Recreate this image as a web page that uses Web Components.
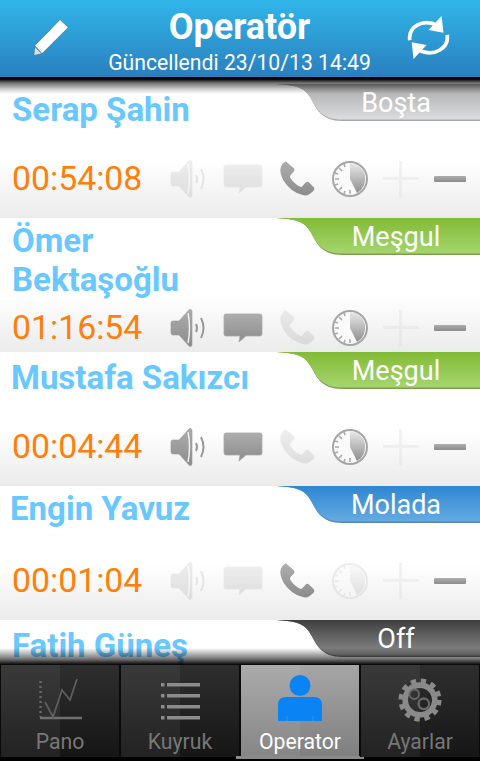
<!DOCTYPE html>
<html lang="tr">
<head>
<meta charset="utf-8">
<title>Operatör</title>
<style>
  html, body { margin: 0; height: 100%; overflow: hidden; background: #000; }
  body { font-family: Roboto, "Noto Sans", sans-serif; }
  operator-app { height: 761px; }
</style>
</head>
<body>
<operator-app>
  <app-header slot="header" title="Operatör" updated="Güncellendi 23/10/13 14:49"></app-header>
  <op-card name="Serap Şahin" time="00:54:08" status="idle" label="Boşta" on="phone clock minus"></op-card>
  <op-card name="Ömer Bektaşoğlu" time="01:16:54" status="busy" label="Meşgul" on="speaker chat clock minus" lift="3"></op-card>
  <op-card name="Mustafa Sakızcı" time="00:04:44" status="busy" label="Meşgul" on="speaker chat clock minus" nudge="-1"></op-card>
  <op-card name="Engin Yavuz" time="00:01:04" status="break" label="Molada" on="phone minus" nudge="-2" lift="3"></op-card>
  <op-card name="Fatih Güneş" status="off" label="Off"></op-card>
  <tab-bar slot="tabs">
    <tab-item icon="chart" label="Pano"></tab-item>
    <tab-item icon="list" label="Kuyruk"></tab-item>
    <tab-item icon="user" label="Operator" active></tab-item>
    <tab-item icon="gear" label="Ayarlar"></tab-item>
  </tab-bar>
</operator-app>

<script>
const ICONS = {
  speaker: `<svg width="38" height="40" viewBox="0 0 38 40">
    <path fill="url(#g)" stroke="#999" stroke-width=".6" d="M1 15q0-2 2-2h6L19 2q2-2 3 1v34q-1 3-3 1L9 27H3q-2 0-2-2z"/>
    <path fill="none" stroke="#eee" stroke-width="1.5" d="M18 5q3 15 0 30"/>
    <path fill="none" stroke="#999" stroke-width="2" d="M26 16q2 4 0 8M31 10q5 10 0 20"/></svg>`,
  chat: `<svg width="40" height="30" viewBox="0 0 40 30">
    <path fill="url(#g)" stroke="#aaa" stroke-width=".8" d="M3 1h34q2 0 2 2v18q0 2-2 2H23l-7 6 1-6H3q-2 0-2-2V3q0-2 2-2z"/></svg>`,
  phone: `<svg width="38" height="36" viewBox="0 0 40 38">
    <path fill="url(#g)" d="M9 1l8 7q1 2-1 4l-3 3q-1 1 0 3 4 6 10 9 2 1 3-1l3-3q2-2 4 0l5 5q1 2-1 4l-4 3q-3 2-7 1Q14 33 6 21 1 12 3 6q1-3 4-5 1-1 2 0z"/></svg>`,
  clock: `<svg width="36" height="36" viewBox="0 0 36 36">
    <defs><linearGradient id="w" x1="0" y1="0" x2="0" y2="1"><stop offset="0" stop-color="#e8e8e8"/><stop offset="1" stop-color="#8f8f8f"/></linearGradient></defs>
    <circle cx="18" cy="18" r="17" fill="#fafafa" stroke="#a6a6a6" stroke-width="2"/>
    <path fill="url(#w)" d="M18 18V2a16 16 0 0 1 7 30z"/>
    <path stroke="#aaa" stroke-width="1.6" d="M3 18h4M18 33v-4M7 7l3 3M7 29l3-3M12 3l1 3M3 12l3 1M3 24l3-1M12 33l1-3"/></svg>`,
  plus: `<svg width="36" height="36" viewBox="0 0 36 36">
    <path fill="#c8c8c8" d="M16 0h3v16h17v3H19v17h-3V19H0v-3h16z"/></svg>`,
  minus: `<svg width="32" height="6" viewBox="0 0 32 6">
    <rect width="32" height="6" rx="1" fill="url(#g)"/></svg>`
};

const TAB_ICONS = {
  chart: `<svg width="46" height="44" viewBox="0 0 46 44" fill="none">
    <path stroke="#6a6a6a" stroke-width="2.4" stroke-dasharray="2 3" d="M3.5 2v36"/>
    <path stroke="#6f6f6f" stroke-width="2.5" d="M3 39h42"/>
    <path stroke="#5e5e5e" stroke-width="1.8" d="M8 23l8 15 9-27 8 10 7-21"/></svg>`,
  list: `<svg width="42" height="37" viewBox="0 0 42 37" fill="#8c8c8c">
    <rect x="2" width="3.5" height="3.5"/><rect x="8" width="33" height="3.5"/>
    <rect x="2" y="11" width="3.5" height="3.5"/><rect x="8" y="11" width="33" height="3.5"/>
    <rect x="2" y="22" width="3.5" height="3.5"/><rect x="8" y="22" width="33" height="3.5"/>
    <rect x="2" y="33" width="3.5" height="3.5"/><rect x="8" y="33" width="33" height="3.5"/></svg>`,
  user: `<svg width="44" height="46" viewBox="0 0 44 46" fill="#0a84f4" style="margin-bottom:7px">
    <circle cx="22" cy="10.5" r="10.5"/>
    <path d="M8 22h28q8 0 8 8v16H0V30q0-8 8-8z"/>
    <path stroke="#4a90d0" stroke-width="1" d="M9 41v5M35 41v5"/></svg>`,
  gear: `<svg width="44" height="44" viewBox="0 0 46 46" fill="none" style="margin-bottom:3px">
    <circle cx="23" cy="23" r="20" stroke="#8a8a8a" stroke-width="5" stroke-dasharray="5.5 5"/>
    <circle cx="23" cy="23" r="15.5" stroke="#8a8a8a" stroke-width="6"/>
    <circle cx="17" cy="17" r="5" stroke="#666" stroke-width="2"/>
    <circle cx="27" cy="27" r="5.5" stroke="#666" stroke-width="2.5"/></svg>`
};

const STATUS_COLORS = {
  idle: ['#a9a9a9', '#dcdddf', '#a8a8a8'],
  busy: ['#82bb35', '#a6d56e', '#7d9c52'],
  break: ['#2f86d2', '#64abe2', '#5b86ad'],
  off: ['#3e3e3e', '#8c8c8c', '#6a6a6a']
};

class OperatorApp extends HTMLElement {
  constructor() {
    super();
    this.attachShadow({ mode: 'open' });
    this.shadowRoot.innerHTML = `
      <style>
        :host { display: flex; flex-direction: column; background: #000; }
        .list { position: relative; flex: 1; min-height: 0; overflow: hidden; padding-top: 7px; background: #fff; }
        .shade { position: absolute; left: 0; right: 0; pointer-events: none; z-index: 2; }
        .top { top: 0; height: 17px; background: linear-gradient(#000 0, #000 2px, rgba(0,0,0,.55) 6px, rgba(0,0,0,.15) 13px, rgba(0,0,0,0)); }
        .bottom { bottom: 0; height: 17px; background: linear-gradient(rgba(0,0,0,0), rgba(0,0,0,.25) 5px, rgba(0,0,0,.55) 11px, #000); }
      </style>
      <slot name="header"></slot>
      <div class="list">
        <div class="shade top"></div>
        <slot></slot>
        <div class="shade bottom"></div>
      </div>
      <slot name="tabs"></slot>
    `;
  }
}

class AppHeader extends HTMLElement {
  constructor() {
    super();
    this.attachShadow({ mode: 'open' });
  }

  connectedCallback() {
    this.shadowRoot.innerHTML = `
      <style>
        :host { display: flex; height: 77px; color: #fff; background: linear-gradient(#31b6e9, #2a7fbe); }
        .side { flex: 0 0 90px; display: flex; align-items: center; justify-content: center; padding-bottom: 5px; box-sizing: border-box; }
        .mid { flex: 1; text-align: center; margin-left: -1px; }
        h1 { margin: 0; padding-top: 5px; font: 700 36px/44px Roboto, sans-serif; }
        p { margin: 0; padding-top: 2px; font: 400 21.2px/24px Roboto, sans-serif; white-space: nowrap; }
      </style>
      <div class="side" style="padding-left:11px;padding-bottom:3px">
        <svg width="38" height="41" viewBox="0 0 42 44">
          <path fill="#fff" stroke="#2a6f9c" stroke-width=".7" d="M3 31L31 2l9 9-29 29z"/>
          <path fill="#d8dde0" stroke="#2a6f9c" stroke-width=".7" d="M3 32l8 8-9 2z"/>
        </svg>
      </div>
      <div class="mid">
        <h1>${this.getAttribute('title')}</h1>
        <p>${this.getAttribute('updated')}</p>
      </div>
      <div class="side" style="padding-right:14px;padding-bottom:2px">
        <svg width="43" height="47" viewBox="0 0 46 48" fill="none" stroke="#fff" stroke-width="4">
          <path d="M3 27C1 13 16 3 33 11"/>
          <path fill="#fff" stroke="none" d="M37 1l2 18-16-3z"/>
          <path d="M43 21c2 14-13 24-30 17"/>
          <path fill="#fff" stroke="none" d="M7 47L5 29l16 3z"/>
        </svg>
      </div>
    `;
  }
}

class OpCard extends HTMLElement {
  constructor() {
    super();
    this.attachShadow({ mode: 'open' });
  }

  connectedCallback() {
    const on = (this.getAttribute('on') || '').split(' ');
    const status = this.getAttribute('status');
    const [from, to, edge] = STATUS_COLORS[status];
    const nudge = Number(this.getAttribute('nudge') || 0);
    const lift = Number(this.getAttribute('lift') || 0);
    const time = this.getAttribute('time');
    const icons = Object.keys(ICONS).map(k =>
      `<span class="ic ${on.includes(k) ? 'on' : ''}" style="width:${{speaker:38,chat:40,phone:38,clock:36,plus:36,minus:32}[k]}px">${ICONS[k]}</span>`
    ).join('');
    // the last card is cut off by the tab bar, so it has no row to draw
    const row = time ? `
      <div class="row">
        <div class="time">${time}</div>
        <svg width="0" height="0" style="position:absolute"><defs>
          <linearGradient id="g" x1="0" y1="0" x2="0" y2="1"><stop offset="0" stop-color="#adadad"/><stop offset="1" stop-color="#8c8c8c"/></linearGradient>
        </defs></svg>
        ${icons}
      </div>` : '';
    this.shadowRoot.innerHTML = `
      <style>
        :host { display: block; position: relative; height: 134px; overflow: hidden; background: linear-gradient(#fff 58%, #ebebeb); }
        .head { min-height: 75px; box-sizing: border-box; padding: 6px 0 9px 12px; }
        .name { max-width: 245px; font: 700 33px/39px Roboto, sans-serif; color: #68c8ff; }
        .row { display: flex; align-items: center; height: 40px; padding-left: 12px; }
        .time { flex: 0 0 158px; font: 400 33.8px/40px Roboto, sans-serif; color: #ff7f0a; }
        .ic { display: flex; justify-content: center; align-items: center; margin-right: 15.2px; opacity: .2; }
        .ic.on { opacity: 1; }
        .ic svg { display: block; }
        .status { position: absolute; top: 0; right: 0; width: 210px; height: 37px; }
        .status svg { position: absolute; inset: 0; }
        .label { position: absolute; top: 4px; left: 56px; right: 0; padding-right: 14px; text-align: center; font: 400 27px/31px Roboto, sans-serif; color: #fff; }
      </style>
      <div class="head"><div class="name" style="margin-left:${nudge}px;margin-top:${-lift}px">${this.getAttribute('name')}</div></div>
      ${row}
      <div class="status">
        <svg width="210" height="37" viewBox="0 0 210 37">
          <defs><linearGradient id="s" x1="0" y1="0" x2="0" y2="1"><stop offset="0" stop-color="${from}"/><stop offset="1" stop-color="${to}"/></linearGradient></defs>
          <path fill="${edge}" d="M0 0C18 0 30 2 36 8 42 14 44 23 50 29 55 34 62 37 72 37H210V0z"/>
          <path fill="url(#s)" d="M0 0C18 0 30 2 36 8 42 14 44 22 50 28 55 33 62 35.5 72 35.5H210V0z"/>
        </svg>
        <div class="label">${this.getAttribute('label')}</div>
      </div>
    `;
  }
}

class TabBar extends HTMLElement {
  constructor() {
    super();
    this.attachShadow({ mode: 'open' });
    this.shadowRoot.innerHTML = `
      <style>
        :host { display: grid; grid-template-columns: repeat(4, 1fr); height: 96px; background: #000; }
      </style>
      <slot></slot>
    `;
  }
}

class TabItem extends HTMLElement {
  constructor() {
    super();
    this.attachShadow({ mode: 'open' });
  }

  connectedCallback() {
    const active = this.hasAttribute('active');
    this.shadowRoot.innerHTML = `
      <style>
        :host { display: block; position: relative; height: 96px; }
        .face { box-sizing: border-box; height: 92px; display: flex; flex-direction: column; align-items: center; border-left: 1px solid #0a0a0a; border-right: 1px solid #0a0a0a;
          background: linear-gradient(90deg, rgba(255,255,255,.055) 50%, rgba(255,255,255,0) 50%), linear-gradient(${active ? '#a6a6a6, #7f7f7f' : '#2e2e2e, #161616'}); }
        .art { height: 56px; margin-top: 8px; display: flex; align-items: center; justify-content: center; }
        .art svg { display: block; }
        .label { font: 400 21.2px/26px Roboto, sans-serif; color: ${active ? '#fff' : '#777'}; }
        .line { position: absolute; left: -4px; right: -4px; bottom: 2px; height: 3px; background: #8a8a8a; }
      </style>
      <div class="face">
        <div class="art">${TAB_ICONS[this.getAttribute('icon')]}</div>
        <div class="label">${this.getAttribute('label')}</div>
      </div>
      ${active ? '<div class="line"></div>' : ''}
    `;
  }
}

customElements.define('operator-app', OperatorApp);
customElements.define('app-header', AppHeader);
customElements.define('op-card', OpCard);
customElements.define('tab-bar', TabBar);
customElements.define('tab-item', TabItem);
</script>
</body>
</html>
